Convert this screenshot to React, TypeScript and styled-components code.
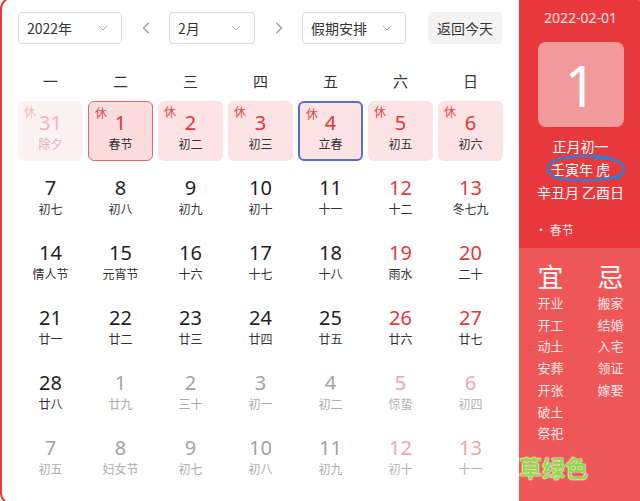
import React from 'react'
import styled, { createGlobalStyle } from 'styled-components'
import { ChevronDown, ChevronLeft, ChevronRight } from 'lucide-react'

const GlobalStyle = createGlobalStyle`
  html, body {
    margin: 0;
    padding: 0;
    background: #fff;
    overflow: hidden;
  }
  body {
    font-family: "Noto Sans CJK SC", "Noto Sans", sans-serif;
  }
`

type Tone = 'normal' | 'weekend' | 'muted' | 'mutedWeekend' | 'holiday' | 'prevHoliday'

interface IDay {
  day: number
  lunar: string
  tone: Tone
  rest?: boolean
  selected?: boolean
  today?: boolean
}

const weekNames = ['一', '二', '三', '四', '五', '六', '日']

const rows: [number, string][][] = [
  [[31, '除夕'], [1, '春节'], [2, '初二'], [3, '初三'], [4, '立春'], [5, '初五'], [6, '初六']],
  [[7, '初七'], [8, '初八'], [9, '初九'], [10, '初十'], [11, '十一'], [12, '十二'], [13, '冬七九']],
  [[14, '情人节'], [15, '元宵节'], [16, '十六'], [17, '十七'], [18, '十八'], [19, '雨水'], [20, '二十']],
  [[21, '廿一'], [22, '廿二'], [23, '廿三'], [24, '廿四'], [25, '廿五'], [26, '廿六'], [27, '廿七']],
  [[28, '廿八'], [1, '廿九'], [2, '三十'], [3, '初一'], [4, '初二'], [5, '惊蛰'], [6, '初四']],
  [[7, '初五'], [8, '妇女节'], [9, '初七'], [10, '初八'], [11, '初九'], [12, '初十'], [13, '十一']]
]

const days: IDay[] = rows.flatMap((row, r) =>
  row.map(([day, lunar], c) => {
    const weekend = c >= 5
    if (r === 0) {
      return {
        day,
        lunar,
        tone: (c === 0 ? 'prevHoliday' : 'holiday') as Tone,
        rest: true,
        selected: c === 1,
        today: c === 4
      }
    }
    const muted = (r === 4 && c > 0) || r === 5
    let tone: Tone = weekend ? 'weekend' : 'normal'
    if (muted) tone = weekend ? 'mutedWeekend' : 'muted'
    return { day, lunar, tone }
  })
)

const numberColor: Record<Tone, string> = {
  normal: '#1f1f1f',
  weekend: '#e03a3f',
  muted: '#a3a3a3',
  mutedWeekend: '#f0a6ad',
  holiday: '#e0343a',
  prevHoliday: '#f3b4b8'
}

const lunarColor: Record<Tone, string> = {
  normal: '#333',
  weekend: '#333',
  muted: '#ababab',
  mutedWeekend: '#b3b3b3',
  holiday: '#333',
  prevHoliday: '#d9b2b4'
}

const suitable = ['开业', '开工', '动土', '安葬', '开张', '破土', '祭祀']
const avoid = ['搬家', '结婚', '入宅', '领证', '嫁娶']

const App: React.FC = () => {
  return (
    <>
      <GlobalStyle />
      <Widget>
        <Main>
          <Toolbar>
            <Select width={104}>
              <span>2022年</span>
              <ChevronDown size={16} strokeWidth={1.4} color="#a8a8a8" />
            </Select>
            <ArrowButton>
              <ChevronLeft size={20} strokeWidth={1.4} color="#9a9a9a" />
            </ArrowButton>
            <Select width={86}>
              <span>2月</span>
              <ChevronDown size={16} strokeWidth={1.4} color="#a8a8a8" />
            </Select>
            <ArrowButton>
              <ChevronRight size={20} strokeWidth={1.4} color="#9a9a9a" />
            </ArrowButton>
            <Select width={104}>
              <span>假期安排</span>
              <ChevronDown size={16} strokeWidth={1.4} color="#a8a8a8" />
            </Select>
            <TodayButton>返回今天</TodayButton>
          </Toolbar>

          <WeekHeader>
            {weekNames.map(w => (
              <WeekName key={w}>{w}</WeekName>
            ))}
          </WeekHeader>

          <DayGrid>
            {days.map((d, i) => (
              <DayCell
                key={i}
                $tone={d.tone}
                $selected={d.selected}
                $today={d.today}
              >
                {d.rest && <RestTag $faded={d.tone === 'prevHoliday'}>休</RestTag>}
                <DayNumber $tone={d.tone}>{d.day}</DayNumber>
                <Lunar $tone={d.tone}>{d.lunar}</Lunar>
              </DayCell>
            ))}
          </DayGrid>
        </Main>

        <Side>
          <SideTop>
            <DateText>2022-02-01</DateText>
            <BigDay>1</BigDay>
            <LunarInfo>
              <div>正月初一</div>
              <Circled>
                壬寅年 虎
                <Scribble viewBox="0 0 90 30" width="88" height="28">
                  <path
                    d="M70 3 C52 -1 18 1 8 8 C0 14 4 24 22 26 C42 28 68 27 80 22 C90 17 86 8 74 5 C66 3 58 3 54 4"
                    fill="none"
                    stroke="#2f7fd8"
                    strokeWidth="2.6"
                    strokeLinecap="round"
                  />
                  <path
                    d="M56 27 C64 25 72 24 82 25"
                    fill="none"
                    stroke="#2f7fd8"
                    strokeWidth="2.2"
                    strokeLinecap="round"
                  />
                </Scribble>
              </Circled>
              <div>辛丑月 乙酉日</div>
            </LunarInfo>
            <Festival>• 春节</Festival>
          </SideTop>

          <SideBottom>
            <Column>
              <BigChar>宜</BigChar>
              {suitable.map(s => (
                <Item key={s}>{s}</Item>
              ))}
            </Column>
            <Column>
              <BigChar>忌</BigChar>
              {avoid.map(s => (
                <Item key={s}>{s}</Item>
              ))}
            </Column>
          </SideBottom>
        </Side>

        <ColorNote>草绿色</ColorNote>
      </Widget>
    </>
  )
}

const Widget = styled.div`
  position: relative;
  box-sizing: border-box;
  display: flex;
  width: 646px;
  height: 508px;
  margin-top: -3px;
  border: 2px solid #e8393c;
  border-radius: 12px;
  overflow: hidden;
  background: #fff;
`

const Main = styled.div`
  width: 517px;
  flex-shrink: 0;
  box-sizing: border-box;
  padding: 13px 0 0 16px;
`

const Toolbar = styled.div`
  display: flex;
  align-items: center;
  height: 32px;
`

const Select = styled.div<{ width: number }>`
  box-sizing: border-box;
  width: ${props => props.width}px;
  height: 32px;
  display: flex;
  align-items: center;
  justify-content: space-between;
  padding: 0 10px 0 8px;
  border: 1px solid #dcdcdc;
  border-radius: 4px;
  font-size: 14px;
  color: #333;
`

const ArrowButton = styled.div`
  width: 47px;
  height: 32px;
  display: flex;
  align-items: center;
  justify-content: center;
`

const TodayButton = styled.div`
  margin-left: 22px;
  width: 74px;
  height: 32px;
  display: flex;
  align-items: center;
  justify-content: center;
  background: #f3f3f3;
  border-radius: 4px;
  font-size: 14px;
  color: #333;
`

const WeekHeader = styled.div`
  display: grid;
  grid-template-columns: repeat(7, 65px);
  column-gap: 5px;
  margin-top: 21px;
  height: 30px;
`

const WeekName = styled.div`
  display: flex;
  align-items: center;
  justify-content: center;
  font-size: 15px;
  color: #333;
`

const DayGrid = styled.div`
  display: grid;
  grid-template-columns: repeat(7, 65px);
  grid-auto-rows: 60px;
  gap: 5px;
  margin-top: 6px;
`

const DayCell = styled.div<{ $tone: Tone; $selected?: boolean; $today?: boolean }>`
  position: relative;
  box-sizing: border-box;
  display: flex;
  flex-direction: column;
  align-items: center;
  border-radius: 6px;
  background: ${props =>
    props.$tone === 'holiday'
      ? props.$selected
        ? '#fcdcdc'
        : '#fde3e3'
      : props.$tone === 'prevHoliday'
      ? '#fdf2f2'
      : 'transparent'};
  border: ${props =>
    props.$today
      ? '2px solid #5b6ccf'
      : props.$selected
      ? '1.5px solid #e06a6a'
      : 'none'};
  padding-top: ${props => (props.$today ? 8 : props.$selected ? 8.5 : 10)}px;
`

const RestTag = styled.span<{ $faded?: boolean }>`
  position: absolute;
  top: 4px;
  left: 6px;
  font-size: 12px;
  line-height: 14px;
  color: ${props => (props.$faded ? '#f2bcbf' : '#e04848')};
`

const DayNumber = styled.div<{ $tone: Tone }>`
  font-family: "Noto Sans", "Noto Sans CJK SC", sans-serif;
  font-size: 20px;
  line-height: 24px;
  color: ${props => numberColor[props.$tone]};
`

const Lunar = styled.div<{ $tone: Tone }>`
  margin-top: 1px;
  font-size: 12px;
  line-height: 16px;
  color: ${props => lunarColor[props.$tone]};
`

const Side = styled.div`
  flex: 1;
  display: flex;
  flex-direction: column;
  background: #e8393c;
`

const SideTop = styled.div`
  height: 249px;
  box-sizing: border-box;
  padding-top: 10px;
  display: flex;
  flex-direction: column;
  align-items: center;
  width: 123px;
`

const DateText = styled.div`
  font-family: "Noto Sans", sans-serif;
  font-size: 14px;
  line-height: 18px;
  color: #fde2e2;
`

const BigDay = styled.div`
  margin-top: 15px;
  width: 86px;
  height: 85px;
  border-radius: 8px;
  background: #f29a9b;
  display: flex;
  align-items: center;
  justify-content: center;
  font-family: "Noto Sans", sans-serif;
  font-size: 56px;
  line-height: 1;
  color: #fff;
`

const LunarInfo = styled.div`
  margin-top: 8px;
  display: flex;
  flex-direction: column;
  align-items: center;
  font-size: 14px;
  line-height: 23px;
  color: #fff;
`

const Circled = styled.div`
  position: relative;
`

const Scribble = styled.svg`
  position: absolute;
  left: -9px;
  top: -3px;
  overflow: visible;
`

const Festival = styled.div`
  align-self: flex-start;
  margin: 18px 0 0 16px;
  font-size: 12px;
  line-height: 16px;
  color: #fde8e8;
`

const SideBottom = styled.div`
  flex: 1;
  width: 123px;
  display: flex;
  justify-content: center;
  gap: 34px;
  padding-top: 12px;
  background: #ee5657;
`

const Column = styled.div`
  display: flex;
  flex-direction: column;
  align-items: center;
  width: 26px;
`

const BigChar = styled.div`
  font-size: 26px;
  line-height: 32px;
  color: #fff;
`

const Item = styled.div`
  font-size: 13px;
  line-height: 21.7px;
  color: #ffe6e6;
  white-space: nowrap;
`

const ColorNote = styled.div`
  position: absolute;
  left: 517px;
  top: 453px;
  font-size: 23px;
  line-height: 30px;
  font-weight: 700;
  color: #8ddc4a;
  text-shadow: 0 0 1px #ffffff, 0 0 2px #f0ffe0, 0 0 1px #ffffff;
`

export default App
